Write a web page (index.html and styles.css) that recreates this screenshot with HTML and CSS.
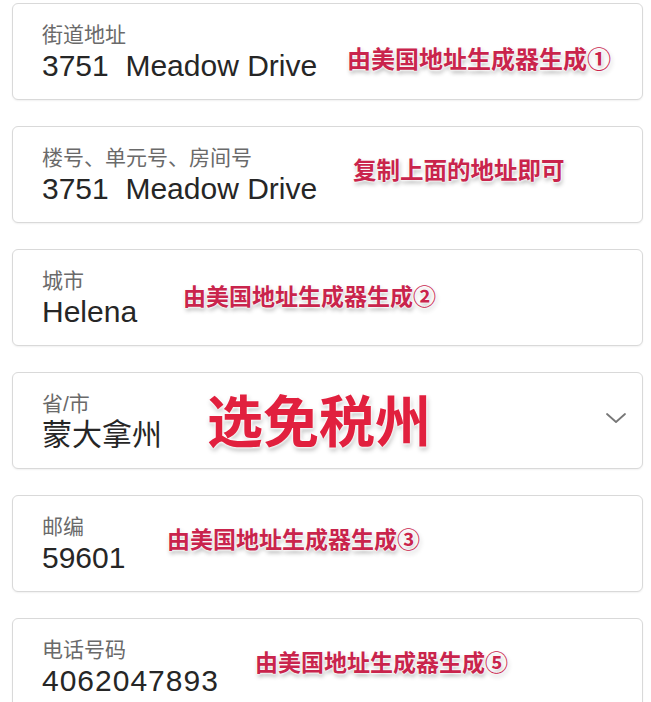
FILE: index.html
```html
<!DOCTYPE html>
<html lang="zh-CN">
<head>
    <meta charset="UTF-8">
    <title>地址表单</title>
    <link rel="stylesheet" href="styles.css">
</head>
<body>
    <div class="form">
        <div class="field">
            <div class="field-body">
                <p class="label">街道地址</p>
                <p class="value">3751&nbsp; Meadow Drive</p>
            </div>
            <span class="note note-1">由美国地址生成器生成①</span>
        </div>
        <div class="field">
            <div class="field-body">
                <p class="label">楼号、单元号、房间号</p>
                <p class="value">3751&nbsp; Meadow Drive</p>
            </div>
            <span class="note note-2">复制上面的地址即可</span>
        </div>
        <div class="field">
            <div class="field-body">
                <p class="label">城市</p>
                <p class="value">Helena</p>
            </div>
            <span class="note note-3">由美国地址生成器生成②</span>
        </div>
        <div class="field">
            <div class="field-body">
                <p class="label">省/市</p>
                <p class="value">蒙大拿州</p>
            </div>
            <svg class="chevron" width="22" height="12" viewBox="0 0 22 12">
                <path d="M2 2 L11 10 L20 2" fill="none" stroke="#777777" stroke-width="1.8" stroke-linecap="round" stroke-linejoin="round"/>
            </svg>
            <span class="note note-big">选免税州</span>
        </div>
        <div class="field">
            <div class="field-body">
                <p class="label">邮编</p>
                <p class="value">59601</p>
            </div>
            <span class="note note-5">由美国地址生成器生成③</span>
        </div>
        <div class="field">
            <div class="field-body">
                <p class="label">电话号码</p>
                <p class="value value-phone">4062047893</p>
            </div>
            <span class="note note-6">由美国地址生成器生成⑤</span>
        </div>
    </div>
</body>
</html>
```

FILE: styles.css
```css
* {
    margin: 0;
    padding: 0;
    box-sizing: border-box;
}
body {
    background: #ffffff;
    font-family: "Liberation Sans", "Noto Sans CJK SC", sans-serif;
    overflow: hidden;
}
.form {
    padding: 3px 8px 0 12px;
    display: flex;
    flex-direction: column;
    gap: 26px;
}
.field {
    position: relative;
    height: 97px;
    border: 1px solid #d9d9d9;
    border-radius: 6px;
    background: #ffffff;
    box-shadow: 0 1px 2px rgba(0,0,0,.06);
    display: flex;
    align-items: center;
    padding: 0 15px 0 29px;
}
.field-body {
    flex: 1;
    display: flex;
    flex-direction: column;
    padding-top: 2px;
}
.label {
    font-size: 21px;
    line-height: 26px;
    color: #6a6a6a;
}
.value {
    font-size: 30px;
    line-height: 36px;
    color: #262626;
}
.value-phone {
    letter-spacing: 1px;
}
.chevron {
    display: block;
    margin-top: -6px;
}

/* red notes drawn on top of the screenshot */
.note {
    position: absolute;
    font-family: "Noto Sans CJK SC", sans-serif;
    font-weight: 700;
    font-size: 23px;
    line-height: 23px;
    color: #c9244c;
    white-space: nowrap;
    text-shadow: 0 0 2px #fff, 0 0 2px #fff, 0 0 3px #fff, 1px 3px 4px rgba(0,0,0,.3);
}
.note-1 { left: 334px; top: 42px; font-size: 24px; }
.note-2 { left: 340px; top: 31px; font-size: 23.5px; }
.note-3 { left: 170px; top: 34px; }
.note-5 { left: 154px; top: 31px; }
.note-6 { left: 242px; top: 31px; }
.note-big {
    left: 194px;
    top: 17px;
    font-size: 56px;
    line-height: 56px;
    color: #e1203e;
    text-shadow: 0 0 3px #fff, 0 0 3px #fff, 0 0 4px #fff, 1px 3px 5px rgba(0,0,0,.3);
}
```
